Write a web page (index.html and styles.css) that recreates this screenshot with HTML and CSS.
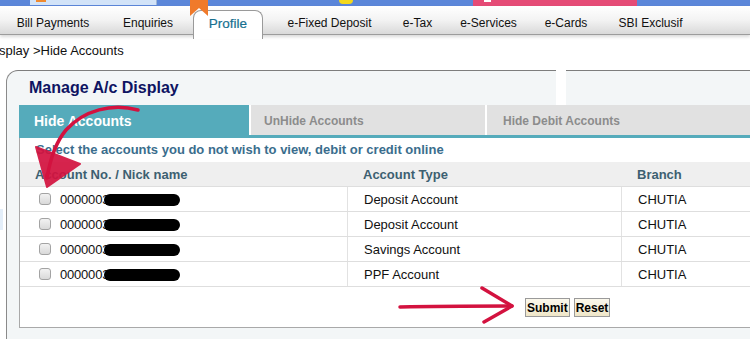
FILE: index.html
```html
<!DOCTYPE html>
<html>
<head>
    <meta charset="UTF-8">
    <title>Manage A/c Display</title>
    <link rel="stylesheet" href="styles.css">
</head>
<body>
    <div class="page">
        <div class="topstrip">
            <span class="promo promo-blue"><i></i></span>
            <span class="promo promo-yellow"></span>
            <span class="promo promo-pink"><i></i></span>
        </div>
        <span class="ribbon"></span>

        <ul class="nav">
            <li class="nav-item">Bill Payments</li>
            <li class="nav-item">Enquiries</li>
            <li class="nav-item active">Profile</li>
            <li class="nav-item">e-Fixed Deposit</li>
            <li class="nav-item">e-Tax</li>
            <li class="nav-item">e-Services</li>
            <li class="nav-item">e-Cards</li>
            <li class="nav-item">SBI Exclusif</li>
        </ul>

        <div class="crumb">splay &gt;Hide Accounts</div>

        <div class="panel">
            <div class="panel-head">
                <div class="panel-title"><h2>Manage A/c Display</h2></div>
                <div class="panel-side"></div>
            </div>
            <div class="panel-body">
                <div class="tabs">
                    <div class="tab active">Hide Accounts</div>
                    <div class="tab tab-unhide">UnHide Accounts</div>
                    <div class="tab tab-debit">Hide Debit Accounts</div>
                </div>
                <div class="tab-content">
                    <p class="hint">Select the accounts you do not wish to view, debit or credit online</p>
                    <div class="acc-table">
                        <div class="acc-row acc-head">
                            <div class="cell">Account No. / Nick name</div>
                            <div class="cell">Account Type</div>
                            <div class="cell">Branch</div>
                        </div>
                        <div class="acc-row">
                            <div class="cell cell-acc"><input type="checkbox" class="chk"><span class="acc-no">0000003</span><span class="redact"></span></div>
                            <div class="cell">Deposit Account</div>
                            <div class="cell">CHUTIA</div>
                        </div>
                        <div class="acc-row">
                            <div class="cell cell-acc"><input type="checkbox" class="chk"><span class="acc-no">0000003</span><span class="redact"></span></div>
                            <div class="cell">Deposit Account</div>
                            <div class="cell">CHUTIA</div>
                        </div>
                        <div class="acc-row">
                            <div class="cell cell-acc"><input type="checkbox" class="chk"><span class="acc-no">0000003</span><span class="redact"></span></div>
                            <div class="cell">Savings Account</div>
                            <div class="cell">CHUTIA</div>
                        </div>
                        <div class="acc-row">
                            <div class="cell cell-acc"><input type="checkbox" class="chk"><span class="acc-no">0000003</span><span class="redact"></span></div>
                            <div class="cell">PPF Account</div>
                            <div class="cell">CHUTIA</div>
                        </div>
                    </div>
                    <div class="actions">
                        <button class="btn">Submit</button>
                        <button class="btn">Reset</button>
                    </div>
                </div>
            </div>
        </div>

        <span class="edge-bit"></span>

        <!-- hand drawn annotations -->
        <svg class="scribble" width="750" height="339" viewBox="0 0 750 339">
            <path d="M138,110 C112,103 84,110 66,130 C55,143 50,160 47,178" fill="none" stroke="#d3123f" stroke-width="3.5" stroke-linecap="round"/>
            <path d="M36,147 L80,164 L47,187 Z" fill="#d3123f" stroke="#d3123f" stroke-width="2" stroke-linejoin="round" opacity="0.92"/>
            <path d="M400,307 C440,306 480,306 512,306" fill="none" stroke="#d3123f" stroke-width="3.5" stroke-linecap="round"/>
            <path d="M482,288 L512,306 L484,322" fill="none" stroke="#d3123f" stroke-width="3.5" stroke-linecap="round" stroke-linejoin="round"/>
        </svg>
    </div>
</body>
</html>
```

FILE: styles.css
```css
body {
    margin: 0;
    font-family: 'Liberation Sans', Arial, sans-serif;
    background: #fff;
}

.page {
    position: relative;
    width: 750px;
    height: 339px;
    overflow: hidden;
}

/* top promo strip */
.topstrip {
    display: flex;
    height: 6px;
    background: #5b86d9;
}

.promo {
    display: block;
    height: 5px;
}

.promo-blue {
    margin-left: 30px;
    width: 126px;
    background: #d2e3f8;
    border-right: 1px solid #9fb6d6;
}

.promo-blue i {
    display: block;
    margin-left: 6px;
    width: 10px;
    height: 2px;
    background: #f08a30;
}

.promo-yellow {
    margin-left: 182px;
    width: 14px;
    height: 4px;
    background: #f4d81c;
    border-radius: 0 0 6px 6px;
}

.promo-pink {
    margin-left: 120px;
    width: 164px;
    height: 6px;
    background: #e54b76;
}

.promo-pink i {
    display: block;
    margin-left: 11px;
    width: 7px;
    height: 2px;
    background: #fff;
}

.ribbon {
    position: absolute;
    left: 190px;
    top: 0;
    width: 18px;
    height: 16px;
    background: #f07a2b;
    clip-path: polygon(0 0, 100% 0, 100% 100%, 50% 50%, 0 100%);
    z-index: 3;
}

/* main menu */
.nav {
    position: relative;
    z-index: 1;
    display: flex;
    align-items: flex-start;
    height: 28px;
    margin: 0;
    padding: 0;
    list-style: none;
    background: linear-gradient(to bottom, #ffffff, #f3f3f3 50%, #d9d9d9);
    border-bottom: 1px solid #9c9c9c;
    box-shadow: 0 2px 3px rgba(0, 0, 0, 0.15);
}

.nav-item {
    display: flex;
    align-items: center;
    justify-content: center;
    box-sizing: border-box;
    height: 28px;
    padding-top: 5px;
    font-size: 12px;
    color: #111;
    white-space: nowrap;
}

.nav-item:nth-child(1) { width: 106px; }
.nav-item:nth-child(2) { width: 84px; }
.nav-item:nth-child(4) { width: 133px; }
.nav-item:nth-child(5) { width: 43px; }
.nav-item:nth-child(6) { width: 99px; }
.nav-item:nth-child(7) { width: 56px; }
.nav-item:nth-child(8) { width: 113px; }

.nav-item.active {
    position: relative;
    z-index: 2;
    width: 70px;
    height: 29px;
    margin: 4px 0 0 3px;
    padding-top: 0;
    padding-bottom: 3px;
    background: #fff;
    border: 1px solid #9a9a9a;
    border-bottom: none;
    border-radius: 8px 8px 0 0;
    font-size: 13.5px;
    color: #17708f;
    -webkit-text-stroke: 0.2px #17708f;
}

.crumb {
    margin: 8px 0 11px -1px;
    font-size: 13px;
    line-height: 16px;
    color: #111;
}

/* panel */
.panel {
    width: 800px;
    margin-left: 6px;
}

.panel-head {
    display: flex;
    height: 35px;
}

.panel-title {
    width: 549px;
    background: #f3f6f7;
    border-top: 1px solid #7d7d7d;
    border-left: 1px solid #8a8a8a;
    border-top-left-radius: 12px;
}

.panel-title h2 {
    margin: 0;
    padding-left: 22px;
    font-size: 16px;
    line-height: 33px;
    color: #0e1462;
}

.panel-side {
    flex: 1;
    margin-left: 10px;
    background: #f3f6f7;
    border-top: 1px solid #7d7d7d;
}

.panel-body {
    background: #f3f6f7;
    border-left: 1px solid #8a8a8a;
    padding: 0 0 20px 12px;
}

/* tabs */
.tabs {
    display: flex;
    gap: 2px;
    height: 30px;
    background: #fff;
    border-bottom: 3px solid #55abbb;
}

.tab {
    box-sizing: border-box;
    padding: 2px 0 0 15px;
    font-size: 12px;
    font-weight: bold;
    line-height: 28px;
    color: #8c8c8c;
    background: #e1e1e1;
}

.tab.active {
    width: 230px;
    font-size: 14px;
    color: #fff;
    background: #55abbb;
}

.tab-unhide {
    width: 234px;
    padding-left: 13px;
}

.tab-debit {
    flex: 1;
    padding-left: 16px;
}

.tab-content {
    background: #fff;
    border-left: 1px solid #a9a9a9;
    border-bottom: 1px solid #a9a9a9;
}

.hint {
    margin: 0;
    padding-left: 16px;
    height: 24px;
    font-size: 13px;
    font-weight: bold;
    line-height: 24px;
    color: #3a6d8d;
}

/* accounts list */
.acc-row {
    display: grid;
    grid-template-columns: 328px 274px 1fr;
    box-sizing: border-box;
    height: 25px;
    border-bottom: 1px solid #dedede;
    font-size: 13px;
    color: #111;
}

.acc-row .cell {
    display: flex;
    align-items: center;
    box-sizing: border-box;
    padding-left: 16px;
    border-right: 1px solid #e2e2e2;
}

.acc-row .cell:last-child {
    border-right: none;
}

.acc-head {
    background: #efefef;
    font-weight: bold;
    color: #3d5f71;
}

.acc-head .cell {
    border-right: none;
    padding-left: 15px;
}

.acc-row .cell-acc {
    padding-left: 19px;
}

.chk {
    appearance: none;
    width: 12px;
    height: 12px;
    margin: 0 9px 0 0;
    border: 1px solid #a3a3a3;
    border-radius: 3px;
    background: linear-gradient(to bottom, #f2f2f2, #d9d9d9);
    box-sizing: border-box;
}

.acc-no {
    font-size: 13px;
    letter-spacing: -0.2px;
}

.redact {
    display: inline-block;
    width: 76px;
    height: 12px;
    margin: 2px 0 0 -5px;
    background: #000;
    border-radius: 7px;
}

.actions {
    display: flex;
    gap: 4px;
    height: 40px;
    padding: 11px 0 0 505px;
    box-sizing: border-box;
}

.btn {
    height: 19px;
    padding: 0 1px;
    font-family: 'Liberation Sans', Arial, sans-serif;
    font-size: 12px;
    font-weight: bold;
    color: #000;
    background: linear-gradient(to bottom, #fbf8ec, #efe6c8);
    border: 1px solid #9a9a9a;
    border-radius: 0;
}

.edge-bit {
    position: absolute;
    left: 0;
    top: 209px;
    width: 3px;
    height: 21px;
    background: #e3eef9;
}

.scribble {
    position: absolute;
    left: 0;
    top: 0;
    z-index: 5;
    pointer-events: none;
}
```
